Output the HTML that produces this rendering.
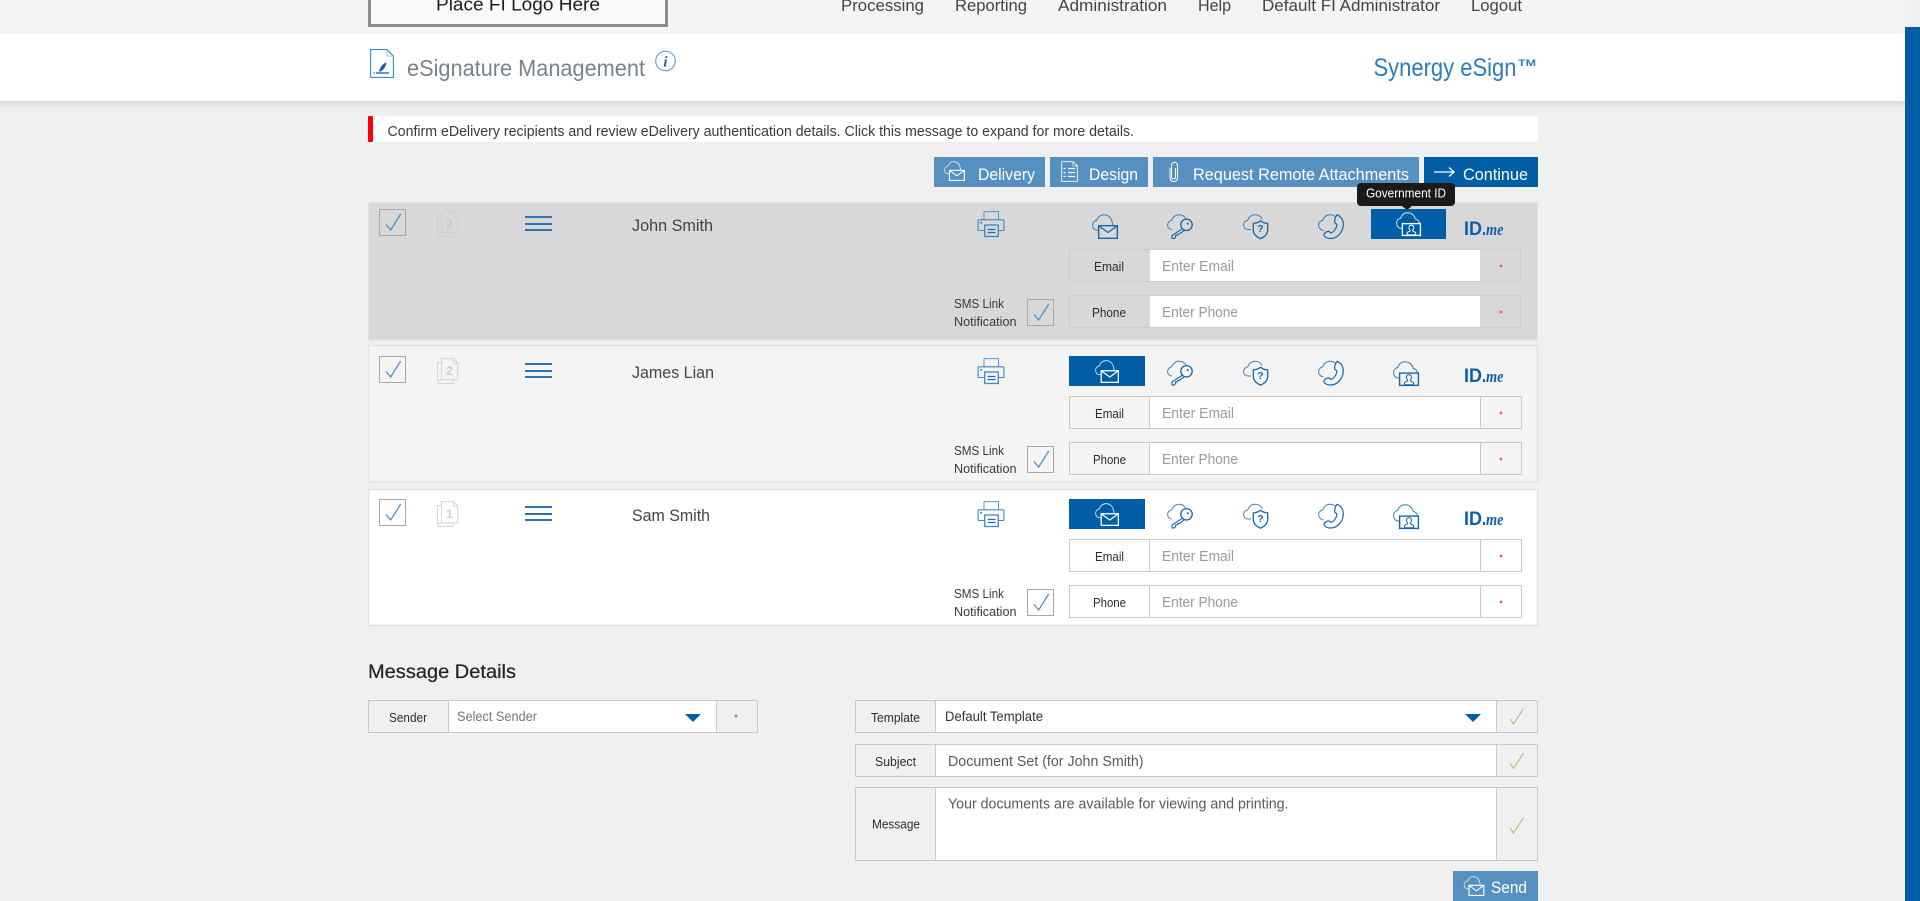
<!DOCTYPE html>
<html lang="en">
<head>
<meta charset="utf-8">
<title>Synergy eSign - eSignature Management</title>
<style>
html,body{margin:0;padding:0;width:1920px;height:901px;overflow:hidden;background:#f0f0f0}
svg{display:block}
text{font-family:"Liberation Sans",Arial,sans-serif}
.nav{font-size:17px;fill:#444}
.btn{font-size:17px;fill:#fff}
.lbl{font-size:13px;fill:#2c2c2c}
.ph{font-size:14.5px;fill:#9a9a9a}
.nm{font-size:16.5px;fill:#444}
.sms{font-size:12.5px;fill:#3a3a3a}
.val{font-size:14.5px;fill:#5a5a5a}
.idm{font-size:19.5px;font-weight:bold;fill:#0f5fa8}
.ime{font-size:17px;font-style:italic;font-weight:bold;fill:#0f5fa8;font-family:"Liberation Serif",serif}
.q{font-size:10.5px;font-weight:bold;fill:#1566ad}
.pg{font-size:12px;font-weight:bold}
</style>
</head>
<body>
<svg xmlns="http://www.w3.org/2000/svg" width="1920" height="901" viewBox="0 0 1920 901">
<defs>
<linearGradient id="sh" x1="0" y1="0" x2="0" y2="1"><stop offset="0" stop-color="#d9d9d9"/><stop offset="1" stop-color="#f0f0f0"/></linearGradient>
<symbol id="cl" viewBox="0 0 26 25" overflow="visible">
<path d="M6.500 16H5C2.400 16 .6 13.800 .6 11.200 .6 8.600 2.400 6.700 4.800 6.400 5.600 3.200 8.400.7 12 .7c4.200 0 7.500 3.100 8 7.200 .5 1 .7 2 .7 3.100" fill="none" stroke="currentColor" stroke-width="1" opacity=".8"/>
</symbol>
<symbol id="mail" viewBox="0 0 26 25" overflow="visible">
<use href="#cl" width="26" height="25"/>
<rect x="6.700" y="11.700" width="18.600" height="12.600" fill="none" stroke="currentColor" stroke-width="1.400"/>
<path d="M7 12l9 6.500 9-6.500" fill="none" stroke="currentColor" stroke-width="1.300"/>
</symbol>
<symbol id="key" viewBox="0 0 26 25" overflow="visible">
<path d="M5 15.500C2.400 15.500.6 13.500.6 11 .6 8.500 2.400 6.700 4.800 6.400 5.600 3.200 8.400.7 12 .7c3 0 5.600 1.600 7 4" fill="none" stroke="currentColor" stroke-width="1" opacity=".8"/>
<circle cx="19.500" cy="10.800" r="5.700" fill="none" stroke="currentColor" stroke-width="1.300"/>
<circle cx="20.800" cy="9.600" r="1" fill="currentColor"/>
<path d="M15.500 14.600L5 21.500V24.400H7.500L8.500 23V21.500H10.200L10.800 20H12.300L17.500 16.200" fill="none" stroke="currentColor" stroke-width="1.100"/>
</symbol>
<symbol id="shd" viewBox="0 0 26 25" overflow="visible">
<path d="M8 15.500H5C2.400 15.500.6 13.500.6 11 .6 8.500 2.400 6.700 4.800 6.400 5.600 3.200 8.400.7 12 .7c3.200 0 6 1.800 7.200 4.500" fill="none" stroke="currentColor" stroke-width="1" opacity=".8"/>
<path d="M17.500 6.800c2 1.600 4.500 2.500 7.200 2.600v6.200c0 4-3 7.200-7.200 9-4.200-1.800-7.200-5-7.200-9V9.400c2.700-.1 5.200-1 7.200-2.600z" fill="none" stroke="currentColor" stroke-width="1.300"/>
</symbol>
<symbol id="tel" viewBox="0 0 26 25" overflow="visible">
<path d="M5.500 16.500C2.600 16 .6 13.800 .6 11.200 .6 8.600 2.400 6.700 4.800 6.400 5.600 3.200 8.400.8 12 .8c2.200 0 4.200.8 5.600 2.200" fill="none" stroke="currentColor" stroke-width="1" opacity=".8"/>
<path d="M19 .8c3.400 1.200 6.300 4.800 6.300 9.200 0 7.800-5.700 14.500-12.800 14.500-3 0-5.500-1-6.500-3-.4-1 .5-2.500 2-3.300 1.500-.8 3-1 3.700-.4l1 1.200c2.500-.5 6-4.500 6.200-8.500l-2-1.800c-.7-.8-.3-2.500.3-4.200.4-1.200.8-2.800 1.800-3.700z" fill="none" stroke="currentColor" stroke-width="1.200"/>
</symbol>
<symbol id="gov" viewBox="0 0 26 25" overflow="visible">
<path d="M6 17H5C2.400 17 .6 14.300 .6 11.600 .6 8.800 2.400 6.900 4.800 6.500 5.600 3.200 8.400.8 12 .8c4 0 7.200 2.600 8 6.400 2.200.5 3.900 2.300 4.500 4.500" fill="none" stroke="currentColor" stroke-width="1" opacity=".85"/>
<rect x="6.600" y="12.100" width="18.800" height="12.300" fill="none" stroke="currentColor" stroke-width="1.400"/>
<path d="M16 13.800c-1.600 0-2.500 1.100-2.500 2.600 0 1 .4 1.900 1.100 2.500v1l-3.100 1.400v2.500h9v-2.500l-3.100-1.400v-1c.7-.6 1.100-1.500 1.100-2.500 0-1.500-.9-2.600-2.500-2.600z" fill="none" stroke="currentColor" stroke-width="1"/>
</symbol>
<symbol id="prn" viewBox="0 0 27 26" overflow="visible">
<path d="M6.500 9V.6h14.500V9" fill="none" stroke="#5d96c8" stroke-width="1"/>
<path d="M7 19.500H1.600A1 1 0 0 1 .6 18.500V9.800A1 1 0 0 1 1.600 8.800H25.400A1 1 0 0 1 26.400 9.800V18.500A1 1 0 0 1 25.400 19.500H20.500" fill="none" stroke="#3f87c5" stroke-width="1.100"/>
<rect x="7.200" y="14" width="13.600" height="11.500" fill="none" stroke="#3f87c5" stroke-width="1.300"/>
<path d="M10 18.500h8M10 21.500h8" stroke="#1c6db5" stroke-width="1.300"/>
<rect x="2.800" y="11" width="1.800" height="1.500" fill="#1c6db5"/>
</symbol>
<symbol id="pgi" viewBox="0 0 22 26" overflow="visible">
<path d="M4.500 22.500H.6V4.500H4.500M1 22.500V25.500H16V22" fill="none" stroke="currentColor" stroke-width="1"/>
<path d="M4.600.6H16.500L20.800 5V21.800H4.600z" fill="none" stroke="currentColor" stroke-width="1"/>
<path d="M16.300.6V5.200H20.800" fill="none" stroke="currentColor" stroke-width=".8"/>
</symbol>
<symbol id="chk" viewBox="0 0 27 27">
<path d="M7 15.500L11.700 21 21.700 5" fill="none" stroke="#4a8ccb" stroke-width="1.200"/>
</symbol>
<symbol id="burg" viewBox="0 0 27 15">
<path d="M0 1h27M0 8h27M0 14h27" stroke="#2a73b5" stroke-width="2"/>
</symbol>
<symbol id="ok" viewBox="0 0 15 17">
<path d="M.8 11L4 16 14 .6" fill="none" stroke="#a9b868" stroke-width="1"/>
</symbol>
</defs>

<!-- page -->
<rect width="1920" height="901" fill="#f0f0f0"/>
<rect width="1905" height="34" fill="#f4f4f4"/>
<rect x="1905" y="27" width="15" height="874" fill="#005ea6"/>
<rect y="34" width="1905" height="67" fill="#fff"/>
<rect y="101" width="1905" height="8" fill="url(#sh)"/>

<!-- logo -->
<rect x="369.500" y="-4" width="297" height="29.500" fill="#f9f9f9" stroke="#8c8c8c" stroke-width="3"/>
<text x="436" y="10.500" font-size="18.500" fill="#1c1c1c" textLength="164" lengthAdjust="spacingAndGlyphs">Place FI Logo Here</text>

<!-- nav -->
<text class="nav" x="841" y="11" textLength="83" lengthAdjust="spacingAndGlyphs">Processing</text>
<text class="nav" x="955" y="11" textLength="72" lengthAdjust="spacingAndGlyphs">Reporting</text>
<text class="nav" x="1058" y="11" textLength="109" lengthAdjust="spacingAndGlyphs">Administration</text>
<text class="nav" x="1198" y="11" textLength="33" lengthAdjust="spacingAndGlyphs">Help</text>
<text class="nav" x="1262" y="11" textLength="178" lengthAdjust="spacingAndGlyphs">Default FI Administrator</text>
<text class="nav" x="1471" y="11" textLength="51" lengthAdjust="spacingAndGlyphs">Logout</text>

<!-- title -->
<path d="M370.600 49.600H387L393.400 56V77.400H370.600z" fill="none" stroke="#2f8fd0" stroke-width="1.100"/>
<path d="M387 49.600V56H393.400" fill="none" stroke="#9cc4e4" stroke-width="1"/>
<path d="M379 71.500c.8-4 3.500-7.500 7.500-9.500-.4 4-2.500 8-6 9.500z" fill="#1a62a8"/>
<path d="M376 73h13" stroke="#0f5fa8" stroke-width="1.300"/>
<rect x="373.500" y="72.300" width="1.300" height="1.300" fill="#0f5fa8"/>
<text x="407" y="76" font-size="23" fill="#7b828c" textLength="238" lengthAdjust="spacingAndGlyphs">eSignature Management</text>
<circle cx="665.500" cy="61" r="9.800" fill="none" stroke="#4c93cc" stroke-width="1"/>
<text x="665.500" y="66.500" font-size="15" font-weight="bold" font-style="italic" fill="#1a62a8" text-anchor="middle" style="font-family:'Liberation Serif',serif">i</text>
<text x="1373.500" y="76" font-size="25" fill="#2f7cbc" textLength="143" lengthAdjust="spacingAndGlyphs">Synergy eSign</text>
<text x="1518" y="66" font-size="9.500" font-weight="bold" fill="#2f7cbc" textLength="18" lengthAdjust="spacingAndGlyphs">TM</text>

<!-- alert -->
<rect x="368" y="116" width="1170" height="26" rx="2" fill="#fff"/>
<rect x="368" y="116" width="5" height="26" rx="1" fill="#f00"/>
<text x="387.500" y="136" font-size="14.500" fill="#3a3a3a" textLength="746.500" lengthAdjust="spacingAndGlyphs">Confirm eDelivery recipients and review eDelivery authentication details. Click this message to expand for more details.</text>

<!-- buttons -->
<rect x="934" y="157" width="111" height="30" fill="#5590c1"/>
<rect x="1050" y="157" width="98" height="30" fill="#5590c1"/>
<rect x="1153" y="157" width="266" height="30" fill="#5590c1"/>
<rect x="1424" y="157" width="114" height="30" fill="#005ea6"/>
<use href="#mail" x="944" y="161" width="21" height="20" style="color:#fff"/>
<g fill="none" stroke="#fff" stroke-width="1">
<path d="M1061.600 161.600H1073L1077.400 166V181.400H1061.600z" opacity=".85"/>
<path d="M1073 161.600V166H1077.400" opacity=".7"/>
<path d="M1068 168.500h7M1068 172.500h7M1068 176.500h7" stroke-width="1.200"/>
<path d="M1063.500 168.500h2M1063.500 172.500h2M1063.500 176.500h2" stroke-width="1.200"/>
<path d="M1170 168V177.500C1170 183 1177.500 183 1177.500 177.500V166C1177.500 161 1171.500 161 1171.500 166V177C1171.500 179.500 1175.500 179.500 1175.500 177V168" stroke-width="1"/>
<path d="M1434 172H1454M1449 167.500L1454 172 1449 176.500" stroke-width="1.300"/>
</g>
<text class="btn" x="978" y="180" textLength="57" lengthAdjust="spacingAndGlyphs">Delivery</text>
<text class="btn" x="1089" y="180" textLength="49" lengthAdjust="spacingAndGlyphs">Design</text>
<text class="btn" x="1193" y="180" textLength="216" lengthAdjust="spacingAndGlyphs">Request Remote Attachments</text>
<text class="btn" x="1463" y="180" textLength="65" lengthAdjust="spacingAndGlyphs">Continue</text>

<!-- ROW 1 -->
<rect x="368.500" y="202.500" width="1169" height="137.500" fill="#d8d8d8" stroke="#e3e3e3"/>
<rect x="379.500" y="209.500" width="26" height="26" fill="none" stroke="#a8a8a8"/>
<use href="#chk" x="379" y="209" width="27" height="27"/>
<use href="#pgi" x="437" y="211" width="22" height="26" style="color:#cecece"/>
<text class="pg" x="449.500" y="228" fill="#c8c8c8" text-anchor="middle">2</text>
<use href="#burg" x="525" y="216" width="27" height="15"/>
<text class="nm" x="632" y="231" textLength="81" lengthAdjust="spacingAndGlyphs">John Smith</text>
<use href="#prn" x="977.500" y="211" width="27" height="26"/>
<use href="#mail" x="1092" y="214" width="26" height="25" style="color:#1566ad"/>
<use href="#key" x="1167" y="214" width="26" height="25" style="color:#1566ad"/>
<use href="#shd" x="1243" y="214" width="26" height="25" style="color:#1566ad"/>
<text class="q" x="1260.500" y="232" text-anchor="middle">?</text>
<use href="#tel" x="1318" y="214" width="26" height="25" style="color:#1566ad"/>
<rect x="1371" y="209" width="75" height="30" fill="#005ea6"/>
<use href="#gov" x="1396" y="212" width="25" height="24" style="color:#fff"/>
<text class="idm" x="1464" y="235" textLength="18" lengthAdjust="spacingAndGlyphs">ID</text>
<text class="idm" x="1482" y="235" textLength="4" lengthAdjust="spacingAndGlyphs">.</text>
<text class="ime" x="1486" y="235" textLength="17.500" lengthAdjust="spacingAndGlyphs">me</text>

<rect x="1069.500" y="249.500" width="451" height="32" fill="#d8d8d8" stroke="#cdcdcd"/>
<rect x="1150" y="250" width="330" height="31" fill="#fff"/>
<text class="lbl" x="1094" y="271" textLength="30" lengthAdjust="spacingAndGlyphs">Email</text>
<text class="ph" x="1162" y="271" textLength="72" lengthAdjust="spacingAndGlyphs">Enter Email</text>
<circle cx="1501" cy="266" r="1.400" fill="#e5646e"/>
<rect x="1069.500" y="295.500" width="451" height="32" fill="#d8d8d8" stroke="#cdcdcd"/>
<rect x="1150" y="296" width="330" height="31" fill="#fff"/>
<text class="lbl" x="1092" y="317" textLength="34" lengthAdjust="spacingAndGlyphs">Phone</text>
<text class="ph" x="1162" y="317" textLength="76" lengthAdjust="spacingAndGlyphs">Enter Phone</text>
<circle cx="1501" cy="312" r="1.400" fill="#e5646e"/>
<text class="sms" x="954" y="308" textLength="50" lengthAdjust="spacingAndGlyphs">SMS Link</text>
<text class="sms" x="954" y="326" textLength="62.500" lengthAdjust="spacingAndGlyphs">Notification</text>
<rect x="1027.500" y="299.500" width="26" height="26" fill="none" stroke="#a8a8a8"/>
<use href="#chk" x="1027" y="299" width="27" height="27"/>

<!-- ROW 2 -->
<rect x="368.500" y="345.500" width="1169" height="136.500" fill="#f4f4f4" stroke="#e2e2e2" stroke-width="1.500"/>
<rect x="379.500" y="356.500" width="26" height="26" fill="none" stroke="#a8a8a8"/>
<use href="#chk" x="379" y="356" width="27" height="27"/>
<use href="#pgi" x="437" y="358" width="22" height="26" style="color:#d4d4d4"/>
<text class="pg" x="449.500" y="375" fill="#cccccc" text-anchor="middle">2</text>
<use href="#burg" x="525" y="363" width="27" height="15"/>
<text class="nm" x="632" y="378" textLength="82" lengthAdjust="spacingAndGlyphs">James Lian</text>
<use href="#prn" x="977.500" y="358" width="27" height="26"/>
<rect x="1069" y="356" width="76" height="30" fill="#005ea6"/>
<use href="#mail" x="1095" y="360" width="24" height="23" style="color:#fff"/>
<use href="#key" x="1167" y="360.500" width="26" height="25" style="color:#1566ad"/>
<use href="#shd" x="1243" y="360.500" width="26" height="25" style="color:#1566ad"/>
<text class="q" x="1260.500" y="379" text-anchor="middle">?</text>
<use href="#tel" x="1318" y="360.500" width="26" height="25" style="color:#1566ad"/>
<use href="#gov" x="1393" y="361" width="26" height="25" style="color:#1566ad"/>
<text class="idm" x="1464" y="382" textLength="18" lengthAdjust="spacingAndGlyphs">ID</text>
<text class="idm" x="1482" y="382" textLength="4" lengthAdjust="spacingAndGlyphs">.</text>
<text class="ime" x="1486" y="382" textLength="17.500" lengthAdjust="spacingAndGlyphs">me</text>

<rect x="1069.500" y="396.500" width="452" height="32" fill="#f4f4f4" stroke="#c9c9c9"/>
<rect x="1150" y="397" width="331" height="31" fill="#fff"/>
<path d="M1149.500 397V428M1480.500 397V428" stroke="#c9c9c9"/>
<text class="lbl" x="1095" y="418" textLength="29" lengthAdjust="spacingAndGlyphs">Email</text>
<text class="ph" x="1162" y="418" textLength="72" lengthAdjust="spacingAndGlyphs">Enter Email</text>
<circle cx="1501" cy="413" r="1.400" fill="#e5646e"/>
<rect x="1069.500" y="442.500" width="452" height="32" fill="#f4f4f4" stroke="#c9c9c9"/>
<rect x="1150" y="443" width="331" height="31" fill="#fff"/>
<path d="M1149.500 443V474M1480.500 443V474" stroke="#c9c9c9"/>
<text class="lbl" x="1093" y="464" textLength="33" lengthAdjust="spacingAndGlyphs">Phone</text>
<text class="ph" x="1162" y="464" textLength="76" lengthAdjust="spacingAndGlyphs">Enter Phone</text>
<circle cx="1501" cy="459" r="1.400" fill="#e5646e"/>
<text class="sms" x="954" y="455" textLength="50" lengthAdjust="spacingAndGlyphs">SMS Link</text>
<text class="sms" x="954" y="473" textLength="62.500" lengthAdjust="spacingAndGlyphs">Notification</text>
<rect x="1027.500" y="446.500" width="26" height="26" fill="none" stroke="#a8a8a8"/>
<use href="#chk" x="1027" y="446" width="27" height="27"/>

<!-- ROW 3 -->
<rect x="368.500" y="489.500" width="1169" height="136" fill="#fff" stroke="#e2e2e2" stroke-width="1.500"/>
<rect x="379.500" y="499.500" width="26" height="26" fill="none" stroke="#a8a8a8"/>
<use href="#chk" x="379" y="499" width="27" height="27"/>
<use href="#pgi" x="437" y="501" width="22" height="26" style="color:#d4d4d4"/>
<text class="pg" x="449.500" y="518" fill="#cccccc" text-anchor="middle">1</text>
<use href="#burg" x="525" y="506" width="27" height="15"/>
<text class="nm" x="632" y="521" textLength="78" lengthAdjust="spacingAndGlyphs">Sam Smith</text>
<use href="#prn" x="977.500" y="501" width="27" height="26"/>
<rect x="1069" y="499" width="76" height="30" fill="#005ea6"/>
<use href="#mail" x="1095" y="503" width="24" height="23" style="color:#fff"/>
<use href="#key" x="1167" y="503.500" width="26" height="25" style="color:#1566ad"/>
<use href="#shd" x="1243" y="503.500" width="26" height="25" style="color:#1566ad"/>
<text class="q" x="1260.500" y="522" text-anchor="middle">?</text>
<use href="#tel" x="1318" y="503.500" width="26" height="25" style="color:#1566ad"/>
<use href="#gov" x="1393" y="504" width="26" height="25" style="color:#1566ad"/>
<text class="idm" x="1464" y="525" textLength="18" lengthAdjust="spacingAndGlyphs">ID</text>
<text class="idm" x="1482" y="525" textLength="4" lengthAdjust="spacingAndGlyphs">.</text>
<text class="ime" x="1486" y="525" textLength="17.500" lengthAdjust="spacingAndGlyphs">me</text>

<rect x="1069.500" y="539.500" width="452" height="32" fill="#fff" stroke="#c9c9c9"/>
<path d="M1149.500 540V571M1480.500 540V571" stroke="#c9c9c9"/>
<text class="lbl" x="1095" y="561" textLength="29" lengthAdjust="spacingAndGlyphs">Email</text>
<text class="ph" x="1162" y="561" textLength="72" lengthAdjust="spacingAndGlyphs">Enter Email</text>
<circle cx="1501" cy="556" r="1.400" fill="#e5646e"/>
<rect x="1069.500" y="585.500" width="452" height="32" fill="#fff" stroke="#c9c9c9"/>
<path d="M1149.500 586V617M1480.500 586V617" stroke="#c9c9c9"/>
<text class="lbl" x="1093" y="607" textLength="33" lengthAdjust="spacingAndGlyphs">Phone</text>
<text class="ph" x="1162" y="607" textLength="76" lengthAdjust="spacingAndGlyphs">Enter Phone</text>
<circle cx="1501" cy="602" r="1.400" fill="#e5646e"/>
<text class="sms" x="954" y="598" textLength="50" lengthAdjust="spacingAndGlyphs">SMS Link</text>
<text class="sms" x="954" y="616" textLength="62.500" lengthAdjust="spacingAndGlyphs">Notification</text>
<rect x="1027.500" y="589.500" width="26" height="26" fill="none" stroke="#a8a8a8"/>
<use href="#chk" x="1027" y="589" width="27" height="27"/>

<!-- MESSAGE DETAILS -->
<text x="368" y="678" font-size="19" fill="#222" stroke="#222" stroke-width=".2" textLength="148" lengthAdjust="spacingAndGlyphs">Message Details</text>

<rect x="368.500" y="700.500" width="389" height="32" fill="#f0f0f0" stroke="#c9c9c9"/>
<rect x="448.500" y="701" width="267.500" height="31" fill="#fff"/>
<path d="M448.500 701V732M716.500 701V732" stroke="#c9c9c9"/>
<text class="lbl" x="389" y="722" textLength="38" lengthAdjust="spacingAndGlyphs">Sender</text>
<text x="457" y="721" font-size="13.500" fill="#75767c" textLength="80" lengthAdjust="spacingAndGlyphs">Select Sender</text>
<path d="M685 714H701L693 722z" fill="#005ea6"/>
<circle cx="736" cy="716" r="1.400" fill="#e5646e"/>

<rect x="855.500" y="700.500" width="682" height="32" fill="#f0f0f0" stroke="#c9c9c9"/>
<rect x="935.500" y="701" width="561" height="31" fill="#fff"/>
<path d="M935.500 701V732M1496.500 701V732" stroke="#c9c9c9"/>
<text class="lbl" x="871" y="722" textLength="49" lengthAdjust="spacingAndGlyphs">Template</text>
<text x="945" y="721" font-size="13.500" fill="#333" textLength="98" lengthAdjust="spacingAndGlyphs">Default Template</text>
<path d="M1465 714H1481L1473 722z" fill="#005ea6"/>
<use href="#ok" x="1509.500" y="708" width="15" height="17"/>

<rect x="855.500" y="744.500" width="682" height="32" fill="#f0f0f0" stroke="#c9c9c9"/>
<rect x="935.500" y="745" width="561" height="31" fill="#fff"/>
<path d="M935.500 745V776M1496.500 745V776" stroke="#c9c9c9"/>
<text class="lbl" x="875" y="766" textLength="41" lengthAdjust="spacingAndGlyphs">Subject</text>
<text class="val" x="948" y="766" textLength="195.500" lengthAdjust="spacingAndGlyphs">Document Set (for John Smith)</text>
<use href="#ok" x="1509.500" y="752.500" width="15" height="17"/>

<rect x="855.500" y="787.500" width="682" height="73" fill="#f0f0f0" stroke="#c9c9c9"/>
<rect x="935.500" y="788" width="561" height="72" fill="#fff"/>
<path d="M935.500 788V860M1496.500 788V860" stroke="#c9c9c9"/>
<text class="lbl" x="872" y="828.500" textLength="48" lengthAdjust="spacingAndGlyphs">Message</text>
<text class="val" x="948" y="808.500" textLength="340.500" lengthAdjust="spacingAndGlyphs">Your documents are available for viewing and printing.</text>
<use href="#ok" x="1509.500" y="817" width="15" height="17"/>

<rect x="1453" y="871" width="85" height="30" fill="#5590c1"/>
<use href="#mail" x="1463" y="876" width="22" height="20" style="color:#fff"/>
<text class="btn" x="1491" y="893" textLength="36" lengthAdjust="spacingAndGlyphs">Send</text>

<!-- tooltip (on top) -->
<rect x="1357" y="183" width="98" height="23" rx="4" fill="#1a1a1a"/>
<path d="M1402 206H1412L1407 210z" fill="#1a1a1a"/>
<text x="1366" y="197.500" font-size="12.500" fill="#fff" textLength="80" lengthAdjust="spacingAndGlyphs">Government ID</text>
</svg>
</body>
</html>
